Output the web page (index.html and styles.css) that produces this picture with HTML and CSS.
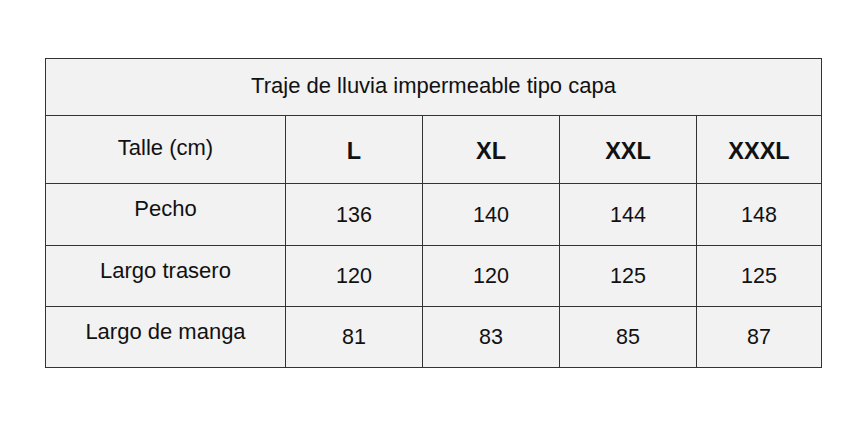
FILE: index.html
```html
<!DOCTYPE html>
<html lang="es">
<head>
<meta charset="utf-8">
<title>Traje de lluvia impermeable tipo capa</title>
<link rel="stylesheet" href="styles.css">
</head>
<body>
<div class="page">
  <table class="size-table">
    <colgroup>
      <col class="c-label">
      <col class="c-size">
      <col class="c-size">
      <col class="c-size">
      <col class="c-last">
    </colgroup>
    <tr class="r-title">
      <td colspan="5" class="title">Traje de lluvia impermeable tipo capa</td>
    </tr>
    <tr class="r-head">
      <td class="label head-label">Talle (cm)</td>
      <td class="size">L</td>
      <td class="size">XL</td>
      <td class="size">XXL</td>
      <td class="size">XXXL</td>
    </tr>
    <tr class="r-a">
      <td class="label">Pecho</td>
      <td class="num">136</td>
      <td class="num">140</td>
      <td class="num">144</td>
      <td class="num">148</td>
    </tr>
    <tr class="r-b">
      <td class="label">Largo trasero</td>
      <td class="num">120</td>
      <td class="num">120</td>
      <td class="num">125</td>
      <td class="num">125</td>
    </tr>
    <tr class="r-b">
      <td class="label">Largo de manga</td>
      <td class="num">81</td>
      <td class="num">83</td>
      <td class="num">85</td>
      <td class="num">87</td>
    </tr>
  </table>
</div>
</body>
</html>
```

FILE: styles.css
```css
html, body {
  margin: 0;
  padding: 0;
  background: #ffffff;
}

.page {
  padding: 58px 0 0 45px;
}

.size-table {
  border-collapse: collapse;
  table-layout: fixed;
  width: 777px;
  font-family: "Liberation Sans", Arial, sans-serif;
  color: #111;
  background: #f2f2f2;
}

.size-table td {
  border: 1px solid #333;
  padding: 0;
  text-align: center;
  vertical-align: middle;
  font-size: 22px;
  line-height: 24px;
}

.c-label { width: 240px; }
.c-size { width: 137px; }
.c-last { width: 125px; }

.r-title { height: 57px; }
.r-head { height: 68px; }
.r-a { height: 62px; }
.r-b { height: 61px; }

.size-table .title {
  padding-bottom: 3px;
}

.size-table .label {
  padding-bottom: 11px;
}

.size-table .head-label {
  padding-bottom: 4px;
}

.size-table .size {
  font-weight: bold;
  font-size: 23.5px;
  padding-top: 2px;
}

.size-table .num {
  font-size: 21.5px;
}
```
